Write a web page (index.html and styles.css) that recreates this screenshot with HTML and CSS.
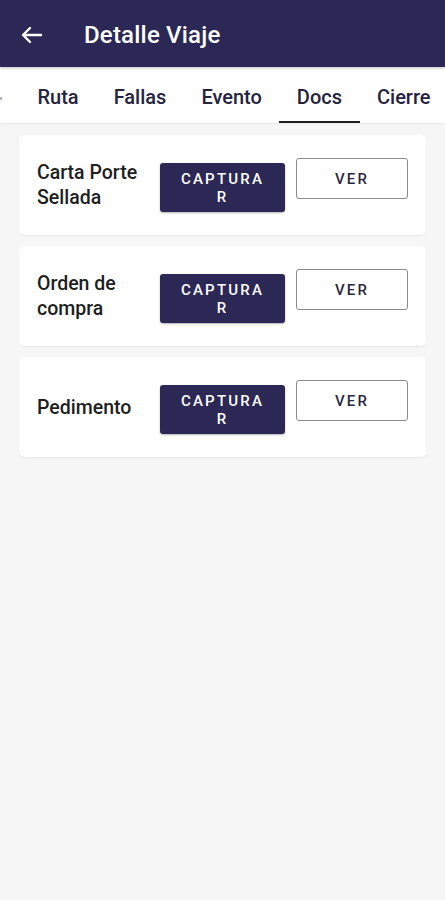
FILE: index.html
```html
<!DOCTYPE html>
<html lang="es">

<head>
    <meta charset="UTF-8">
    <meta name="viewport" content="width=device-width, initial-scale=1.0">
    <title>Detalle Viaje</title>
    <link rel="stylesheet" href="styles.css">
</head>

<body>
    <header class="topbar">
        <button class="back" aria-label="back">
            <svg width="24" height="24" viewBox="0 0 24 24" fill="none" stroke="white" stroke-width="2.4"
                stroke-linecap="round" stroke-linejoin="round">
                <path d="M21 12H3.5" />
                <path d="M10 5l-7 7 7 7" />
            </svg>
        </button>
        <h1>Detalle Viaje</h1>
    </header>

    <nav class="tabs">
        <div class="tabs-track">
            <span class="tab-edge"></span>
            <a class="tab">Ruta</a>
            <a class="tab">Fallas</a>
            <a class="tab">Evento</a>
            <a class="tab is-active">Docs</a>
            <a class="tab">Cierre</a>
        </div>
    </nav>

    <main class="docs">
        <article class="doc">
            <h2>Carta Porte Sellada</h2>
            <div class="actions">
                <button class="btn is-primary">CAPTURAR</button>
                <button class="btn is-outline">VER</button>
            </div>
        </article>

        <article class="doc">
            <h2>Orden de compra</h2>
            <div class="actions">
                <button class="btn is-primary">CAPTURAR</button>
                <button class="btn is-outline">VER</button>
            </div>
        </article>

        <article class="doc">
            <h2>Pedimento</h2>
            <div class="actions">
                <button class="btn is-primary">CAPTURAR</button>
                <button class="btn is-outline">VER</button>
            </div>
        </article>
    </main>
</body>

</html>
```

FILE: styles.css
```css
*,
*::before,
*::after {
    box-sizing: border-box;
    margin: 0;
    padding: 0;
}

body {
    font-family: Roboto, "Noto Sans", sans-serif;
    background: #f6f6f6;
    min-height: 100vh;
    overflow: hidden;
}

.topbar {
    background: #2c2856;
    height: 67px;
    display: flex;
    align-items: center;
    padding: 0 20px;
    box-shadow: 0 1px 3px rgba(0, 0, 0, 0.25);
    position: relative;
    z-index: 2;

    & .back {
        background: none;
        border: 0;
        width: 24px;
        height: 24px;
        display: flex;
        margin-top: 2px;
    }

    & h1 {
        color: white;
        font-size: 24px;
        font-weight: 500;
        margin-left: 40px;
        margin-top: 3px;
        letter-spacing: 0.2px;
    }
}

.tabs {
    background: white;
    height: 56px;
    overflow: hidden;
    box-shadow: 0 1px 2px rgba(0, 0, 0, 0.06);
}

.tabs-track {
    display: flex;
    height: 100%;
    white-space: nowrap;
}

.tab-edge {
    width: 20px;
    flex-shrink: 0;
    display: flex;
    align-items: center;
    padding-top: 6px;

    &::before {
        content: "";
        width: 2px;
        height: 3px;
        background: #b5b5bd;
    }
}

.tab {
    display: flex;
    align-items: center;
    padding: 0 17.5px;
    height: 100%;
    font-size: 20px;
    font-weight: 500;
    color: #26233f;
    border-bottom: 2px solid transparent;
    padding-top: 5px;

    &.is-active {
        border-bottom-color: #1f1f1f;
    }
}

.docs {
    display: flex;
    flex-direction: column;
    gap: 11px;
    padding: 12px 19px;
}

.doc {
    background: white;
    border-radius: 5px;
    height: 100px;
    display: flex;
    align-items: center;
    padding: 0 18px;
    box-shadow: 0 1px 2px rgba(0, 0, 0, 0.06);

    & h2 {
        flex: 1;
        font-size: 19.5px;
        font-weight: 500;
        line-height: 25px;
        color: #1e1e1e;
        padding-right: 8px;
    }
}

.actions {
    display: flex;
    align-items: baseline;
    gap: 11px;
}

.btn {
    font-family: Roboto, "Noto Sans", sans-serif;
    font-size: 15px;
    font-weight: 500;
    letter-spacing: 2.2px;
    line-height: 18px;
    border-radius: 3px;
    cursor: pointer;

    &.is-primary {
        width: 125px;
        height: 49px;
        padding: 6px 18px;
        background: #2c2856;
        color: white;
        border: 0;
        word-break: break-all;
        box-shadow: 0 1px 2px rgba(0, 0, 0, 0.3);
    }

    &.is-outline {
        width: 112px;
        height: 41px;
        background: white;
        color: #2a2840;
        border: 1px solid #8a8a8a;
    }
}
```
